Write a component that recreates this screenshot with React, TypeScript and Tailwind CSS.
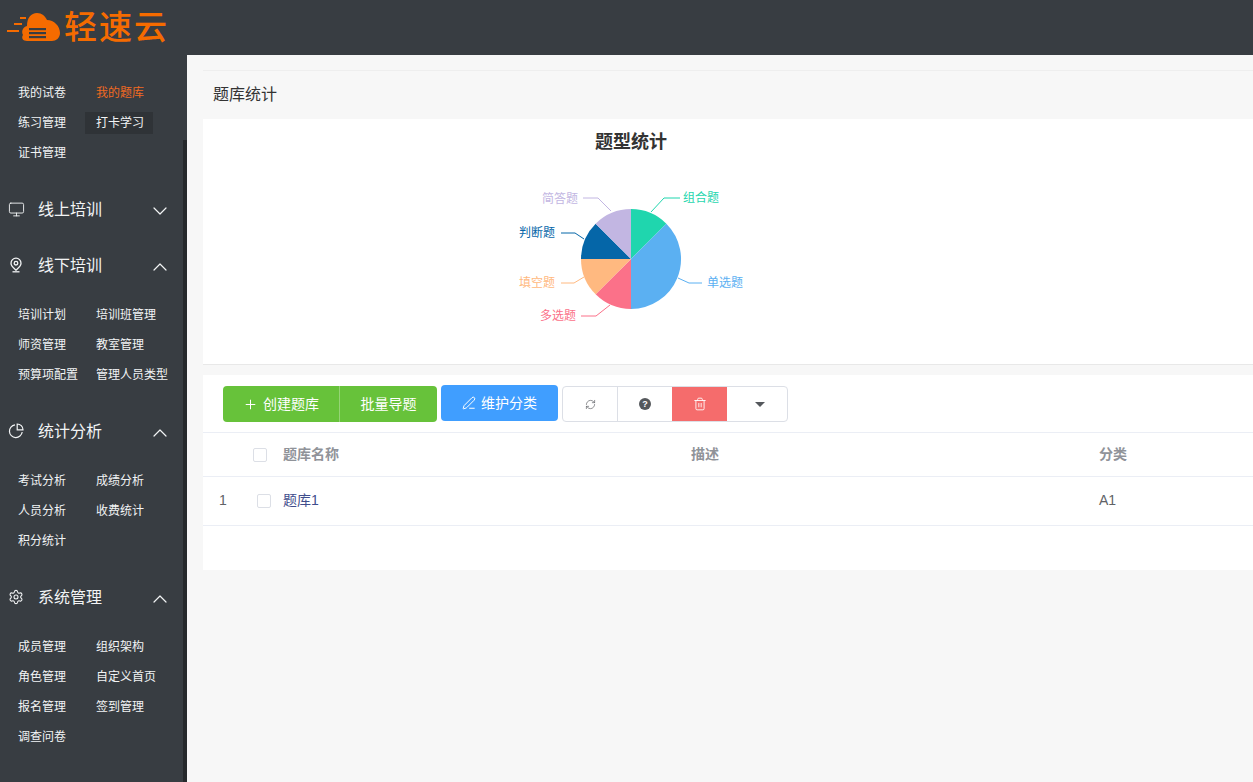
import React from "react";
import { Monitor, ChevronDown, ChevronUp, Plus, PenLine, RefreshCw, Settings, Trash2 } from "lucide-react";

const font = { fontFamily: '"Liberation Sans", "Noto Sans CJK SC", sans-serif' };

function Items({ items, active, hover }: { items: string[]; active?: string; hover?: string }) {
  return (
    <div className="grid grid-cols-[78px_90px] pl-[18px] mt-[7px] mb-[13px]">
      {items.map((t) => (
        <div key={t} className="h-[30px] flex items-center">
          <span
            className={
              "text-[12px] leading-[22px] whitespace-nowrap " +
              (t === active ? "text-[#f26a21] " : "text-[#f2f4f5] ") +
              (t === hover ? "bg-[#2f3337] -ml-[11px] pl-[11px] pr-[9px]" : "")
            }
          >
            {t}
          </span>
        </div>
      ))}
    </div>
  );
}

function Head({ icon, title, open }: { icon: React.ReactNode; title: string; open: boolean }) {
  return (
    <div className="h-[56px] flex items-center pl-[9px] pr-[17px] text-[#f2f4f5]">
      <div className="w-[14px] h-[16px] flex items-center justify-center">{icon}</div>
      <span className="ml-[15px] mt-[2px] text-[16px] flex-1">{title}</span>
      <div className="w-[12px] h-[24px] mt-[4px] flex items-center justify-center">
        {open ? (
          <ChevronUp size={24} strokeWidth={1.2} className="shrink-0" />
        ) : (
          <ChevronDown size={24} strokeWidth={1.2} className="shrink-0" />
        )}
      </div>
    </div>
  );
}

function Logo() {
  return (
    <div className="flex items-center h-[55px] pl-[7px]">
      <svg width="54" height="29" viewBox="0 0 54 29" className="shrink-0">
        <path
          fill="#f56b00"
          d="M20 28 C16 28 14 25 16 22 C14 18 16 14 20 13 C20 5 24 0 30 0 C35 0 38 3 40 7 C47 7 53 13 53 20 C53 25 49 28 45 28 Z"
        />
        <rect x="13" y="4" width="6" height="2" fill="#f56b00" />
        <rect x="7" y="10" width="8" height="2" fill="#f56b00" />
        <rect x="0" y="17" width="12" height="2" fill="#f56b00" />
        <rect x="22" y="15" width="17" height="2.2" fill="#383d42" />
        <rect x="22" y="19" width="17" height="2.2" fill="#383d42" />
        <rect x="22" y="23" width="17" height="2.2" fill="#383d42" />
      </svg>
      <span className="ml-[3px] text-[33px] leading-none font-medium tracking-[2px] text-[#f56b00] whitespace-nowrap">轻速云</span>
    </div>
  );
}

function Pie() {
  const cx = 131, cy = 90, r = 50;
  const slices = [
    { c: "#1fd6ae", a: 0, b: 45 },
    { c: "#5bb0f2", a: 45, b: 180 },
    { c: "#fb7189", a: 180, b: 225 },
    { c: "#ffb980", a: 225, b: 270 },
    { c: "#0566a8", a: 270, b: 315 },
    { c: "#c2b6e2", a: 315, b: 360 },
  ];
  const pt = (d: number) => {
    const t = (d * Math.PI) / 180;
    return `${cx + r * Math.sin(t)} ${cy - r * Math.cos(t)}`;
  };
  const labels = [
    { t: "组合题", x: 183, y: 33, anchor: "start", c: "#1fd6ae", line: "151,43 164,29 180,29" },
    { t: "单选题", x: 207, y: 118, anchor: "start", c: "#5bb0f2", line: "178,109 189,114 202,114" },
    { t: "多选题", x: 76, y: 151, anchor: "end", c: "#fb7189", line: "110,136 96,147 81,147" },
    { t: "填空题", x: 55, y: 118, anchor: "end", c: "#ffb980", line: "84,108 74,114 61,114" },
    { t: "判断题", x: 55, y: 68, anchor: "end", c: "#0566a8", line: "84,70 75,64 61,64" },
    { t: "简答题", x: 78, y: 34, anchor: "end", c: "#c2b6e2", line: "111,42 98,29 83,29" },
  ];
  return (
    <svg width="300" height="190" viewBox="0 0 300 190" className="absolute left-[297px] top-[50px]">
      {labels.map((l) => (
        <polyline key={l.t} points={l.line} fill="none" stroke={l.c} strokeWidth="1" />
      ))}
      {slices.map((s) => (
        <path key={s.c} d={`M${cx} ${cy} L${pt(s.a)} A${r} ${r} 0 ${s.b - s.a > 180 ? 1 : 0} 1 ${pt(s.b)} Z`} fill={s.c} />
      ))}
      {labels.map((l) => (
        <text key={l.t} x={l.x} y={l.y} fontSize="12" fill={l.c} textAnchor={l.anchor as "start" | "end"}>
          {l.t}
        </text>
      ))}
    </svg>
  );
}

export default function App() {
  return (
    <div className="w-[1253px] h-[782px] overflow-hidden flex flex-col bg-[#f7f7f7]" style={font}>
      <header className="h-[55px] shrink-0 bg-[#383d42]">
        <Logo />
      </header>
      <div className="flex flex-1 min-h-0">
        <aside className="w-[187px] shrink-0 bg-[#383d42] flex">
          <div className="w-[183px] pt-[16px]">
            <Items items={["我的试卷", "我的题库", "练习管理", "打卡学习", "证书管理"]} active="我的题库" hover="打卡学习" />
            <Head icon={<Monitor size={17} strokeWidth={1.3} className="shrink-0" />} title="线上培训" open={false} />
            <Head
              icon={
                <svg width="14" height="16" viewBox="0 0 14 16" fill="none" stroke="currentColor" strokeWidth="1.3" className="shrink-0">
                  <path d="M7 1.2a5 5 0 0 1 5 5c0 3-3 5-5 7-2-2-5-4-5-7a5 5 0 0 1 5-5Z" />
                  <circle cx="7" cy="6.2" r="1.8" />
                  <path d="M3.5 14.8h7" />
                </svg>
              }
              title="线下培训"
              open
            />
            <Items items={["培训计划", "培训班管理", "师资管理", "教室管理", "预算项配置", "管理人员类型"]} />
            <Head
              icon={
                <svg width="16" height="16" viewBox="0 0 16 16" fill="none" stroke="currentColor" strokeWidth="1.2" className="shrink-0">
                  <path d="M7 1.8a6.4 6.4 0 1 0 7.2 7.2" />
                  <path d="M9.2 1a5.8 5.8 0 0 1 5.8 5.8H9.2Z" />
                </svg>
              }
              title="统计分析"
              open
            />
            <Items items={["考试分析", "成绩分析", "人员分析", "收费统计", "积分统计"]} />
            <Head icon={<Settings size={16} strokeWidth={1.6} className="shrink-0" />} title="系统管理" open />
            <Items items={["成员管理", "组织架构", "角色管理", "自定义首页", "报名管理", "签到管理", "调查问卷"]} />
          </div>
          <div className="w-[4px] mt-[85px] bg-[#26292c]" />
        </aside>
        <main className="flex-1 min-w-0 pl-[16px] pt-[15px]">
          <div className="h-[49px] border-t border-[#eeeeee] pl-[10px] pb-[1px] flex items-center text-[16px] text-[#333333]">题库统计</div>
          <div className="relative h-[246px] bg-white border-b border-[#e8e8e8]">
            <div className="absolute left-0 w-[856px] text-center top-[10px] text-[18px] leading-[27px] font-bold text-[#333333]">题型统计</div>
            <Pie />
          </div>
          <div className="mt-[10px] bg-white">
            <div className="h-[58px] border-b border-[#ebeef5] flex items-start pl-[20px]">
              <div className="mt-[11px] h-[36px] w-[214px] flex rounded-[4px] bg-[#67c23a] text-white text-[14px]">
                <div className="w-[117px] border-r border-[#95d475] flex items-center justify-center gap-[5px]">
                  <Plus size={15} strokeWidth={1.6} />
                  创建题库
                </div>
                <div className="flex-1 flex items-center justify-center">批量导题</div>
              </div>
              <div className="ml-[4px] mt-[10px] h-[36px] w-[117px] rounded-[4px] bg-[#409eff] text-white text-[14px] flex items-center justify-center gap-[5px]">
                <PenLine size={14} strokeWidth={1.7} />
                维护分类
              </div>
              <div className="ml-[4px] mt-[11px] h-[36px] w-[226px] flex rounded-[4px] border border-[#dcdfe6] overflow-hidden">
                <div className="w-[55px] border-r border-[#dcdfe6] flex items-center justify-center text-[#606266]">
                  <RefreshCw size={11} strokeWidth={1.5} />
                </div>
                <div className="w-[54px] flex items-center justify-center">
                  <span className="w-[12px] h-[12px] rounded-full bg-[#55585c] text-white text-[9px] font-bold leading-[12px] text-center">?</span>
                </div>
                <div className="w-[55px] bg-[#f56c6c] flex items-center justify-center text-white">
                  <Trash2 size={14} strokeWidth={1.5} />
                </div>
                <div className="flex-1 flex items-center justify-center pl-[5px]">
                  <span className="w-0 h-0 border-x-[5px] border-x-transparent border-t-[5px] border-t-[#55585c]" />
                </div>
              </div>
            </div>
            <div className="h-[44px] border-b border-[#ebeef5] flex items-center text-[14px] font-bold text-[#909399]">
              <div className="w-[50px] pl-[50px] shrink-0">
                <span className="block w-[14px] h-[14px] border border-[#dcdfe6] rounded-[2px] bg-white" />
              </div>
              <div className="w-[438px] pl-[30px] shrink-0 -mt-[1px]">题库名称</div>
              <div className="w-[408px] shrink-0 -mt-[1px]">描述</div>
              <div className="-mt-[1px]">分类</div>
            </div>
            <div className="h-[49px] border-b border-[#ebeef5] flex items-center text-[14px] text-[#606266]">
              <div className="w-[54px] pl-[16px] shrink-0 -mt-[2px]">1</div>
              <div className="w-[26px] shrink-0">
                <span className="block w-[14px] h-[14px] border border-[#dcdfe6] rounded-[2px] bg-white" />
              </div>
              <div className="w-[816px] shrink-0 text-[#3f4d8c] -mt-[2px]">题库1</div>
              <div className="-mt-[2px]">A1</div>
            </div>
            <div className="h-[44px]" />
          </div>
        </main>
      </div>
    </div>
  );
}
